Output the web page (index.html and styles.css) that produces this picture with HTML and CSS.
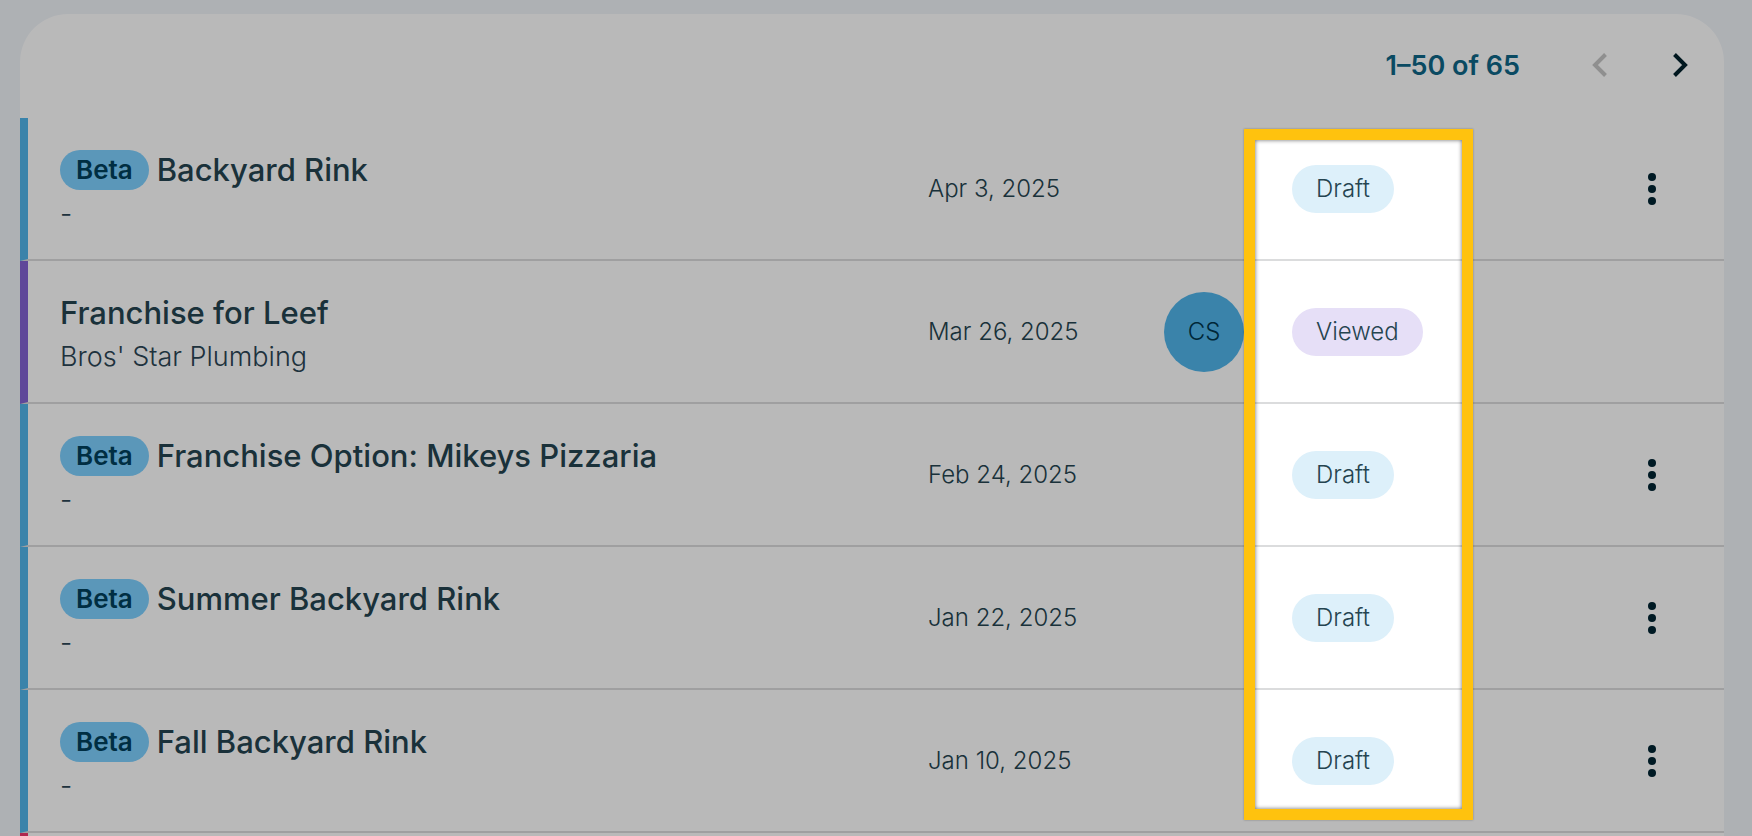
FILE: index.html
```html
<!DOCTYPE html>
<html lang="en">
  <head>
    <meta charset="UTF-8" />
    <meta name="viewport" content="width=device-width, initial-scale=1.0" />
    <title>Quotes</title>
    <link rel="stylesheet" href="styles.css">
  </head>
  <body>
    <main class="page">
      <section class="card">
        <div class="pager">
          <span class="pager-count">1–50 of 65</span>
          <button class="pager-btn" aria-label="Previous page" disabled>
            <svg width="16" height="26" viewBox="0 0 16 26"><path d="M13.500 2.500 3 13l10.500 10.500" /></svg>
          </button>
          <button class="pager-btn" aria-label="Next page">
            <svg width="16" height="26" viewBox="0 0 16 26"><path d="M2.500 2.500 13 13 2.500 23.500" /></svg>
          </button>
        </div>

        <table class="quotes">
          <colgroup>
            <col>
            <col class="col-date">
            <col class="col-owner">
            <col class="col-status">
            <col class="col-menu">
          </colgroup>
          <tbody>
            <tr>
              <td class="name blue">
                <div class="title"><span class="beta">Beta</span>Backyard Rink</div>
                <div class="client">-</div>
              </td>
              <td class="date">Apr 3, 2025</td>
              <td></td>
              <td><span class="status draft">Draft</span></td>
              <td class="menu">
                <button class="menu-btn" aria-label="More options">
                  <svg width="8" height="32" viewBox="0 0 8 32"><circle cx="4" cy="4" r="4" /><circle cx="4" cy="16" r="4" /><circle cx="4" cy="28" r="4" /></svg>
                </button>
              </td>
            </tr>
            <tr>
              <td class="name purple">
                <div class="title">Franchise for Leef</div>
                <div class="client">Bros' Star Plumbing</div>
              </td>
              <td class="date">Mar 26, 2025</td>
              <td><span class="avatar">CS</span></td>
              <td><span class="status viewed">Viewed</span></td>
              <td class="menu"></td>
            </tr>
            <tr>
              <td class="name blue">
                <div class="title"><span class="beta">Beta</span>Franchise Option: Mikeys Pizzaria</div>
                <div class="client">-</div>
              </td>
              <td class="date">Feb 24, 2025</td>
              <td></td>
              <td><span class="status draft">Draft</span></td>
              <td class="menu">
                <button class="menu-btn" aria-label="More options">
                  <svg width="8" height="32" viewBox="0 0 8 32"><circle cx="4" cy="4" r="4" /><circle cx="4" cy="16" r="4" /><circle cx="4" cy="28" r="4" /></svg>
                </button>
              </td>
            </tr>
            <tr>
              <td class="name blue">
                <div class="title"><span class="beta">Beta</span>Summer Backyard Rink</div>
                <div class="client">-</div>
              </td>
              <td class="date">Jan 22, 2025</td>
              <td></td>
              <td><span class="status draft">Draft</span></td>
              <td class="menu">
                <button class="menu-btn" aria-label="More options">
                  <svg width="8" height="32" viewBox="0 0 8 32"><circle cx="4" cy="4" r="4" /><circle cx="4" cy="16" r="4" /><circle cx="4" cy="28" r="4" /></svg>
                </button>
              </td>
            </tr>
            <tr>
              <td class="name blue">
                <div class="title"><span class="beta">Beta</span>Fall Backyard Rink</div>
                <div class="client">-</div>
              </td>
              <td class="date">Jan 10, 2025</td>
              <td></td>
              <td><span class="status draft">Draft</span></td>
              <td class="menu">
                <button class="menu-btn" aria-label="More options">
                  <svg width="8" height="32" viewBox="0 0 8 32"><circle cx="4" cy="4" r="4" /><circle cx="4" cy="16" r="4" /><circle cx="4" cy="28" r="4" /></svg>
                </button>
              </td>
            </tr>
            <tr>
              <td class="name pink"></td>
              <td></td>
              <td></td>
              <td></td>
              <td></td>
            </tr>
          </tbody>
        </table>
      </section>
      <div class="spotlight"><div class="spotlight-frame"></div></div>
    </main>
  </body>
</html>
```

FILE: styles.css
```css
* {
  box-sizing: border-box;
}
body {
  margin: 0;
  font-family: Inter, "Liberation Sans", sans-serif;
  color: #254450;
}
.page {
  position: relative;
  height: 100vh;
  overflow: hidden;
  padding: 14px 28px 0 20px;
  background: #f0f4f9;
}
.card {
  background: #fff;
  border-radius: 48px 48px 0 0;
}
button {
  display: inline-flex;
  align-items: center;
  justify-content: center;
  padding: 0;
  border: 0;
  background: none;
  cursor: pointer;
}

/* pager */
.pager {
  display: flex;
  align-items: center;
  justify-content: flex-end;
  height: 104px;
  padding: 0 4px 2px 0;
}
.pager-count {
  margin-right: 40px;
  font-size: 27px;
  font-weight: 600;
  color: #0e6687;
}
.pager-btn {
  width: 80px;
  height: 80px;
}
.pager-btn path {
  fill: none;
  stroke: #00202c;
  stroke-width: 4;
}
.pager-btn:disabled path {
  stroke: #c5c5c5;
}

/* table */
.quotes {
  width: 100%;
  table-layout: fixed;
  border-collapse: separate;
  border-spacing: 0;
}
.col-date {
  width: 236px;
}
.col-owner {
  width: 128px;
}
.col-status {
  width: 288px;
}
.col-menu {
  width: 144px;
}
td {
  height: 143px;
  padding: 0;
  border-bottom: 2px solid #dbdcdd;
  vertical-align: middle;
}
.name {
  padding-top: 2px;
  padding-left: 32px;
  border-left: 8px solid;
}
.blue {
  border-left-color: #50b5eb;
}
.purple {
  border-left-color: #8363d3;
}
.pink {
  border-left-color: #f3376e;
}
.title {
  display: flex;
  align-items: center;
  gap: 8px;
  height: 40px;
  font-size: 31px;
  font-weight: 500;
  white-space: nowrap;
}
.beta {
  padding: 0 16px;
  border-radius: 20px;
  background: #7ed0ff;
  color: #00405c;
  font-size: 26px;
  font-weight: 600;
  line-height: 40px;
}
.client {
  margin-top: 8px;
  color: #2b4555;
  font-size: 27px;
  font-weight: 300;
  line-height: 32px;
}
.date {
  font-size: 24px;
  font-weight: 300;
}
.avatar {
  display: flex;
  align-items: center;
  justify-content: center;
  width: 80px;
  height: 80px;
  border-radius: 50%;
  background: #50b5eb;
  color: #00354d;
  font-size: 24px;
  font-weight: 300;
}
.status {
  display: inline-block;
  padding: 0 24px;
  border-radius: 24px;
  font-size: 24px;
  font-weight: 300;
  line-height: 48px;
  vertical-align: middle;
}
.draft {
  background: #ddf0fa;
}
.viewed {
  background: #e6dff7;
}
.menu {
  text-align: center;
}
.menu-btn {
  width: 80px;
  height: 80px;
  vertical-align: middle;
}
.menu-btn svg {
  fill: #002432;
}

/* dims everything except the status column */
.spotlight {
  position: absolute;
  top: 129px;
  right: 279px;
  width: 229px;
  height: 691px;
  box-shadow: 0 0 0 4000px rgba(0, 0, 0, 0.275);
  pointer-events: none;
}
.spotlight-frame {
  height: 100%;
  border: 11px solid #ffc20e;
  box-shadow: 0 0 2px rgba(0, 0, 0, 0.3), inset 0 0 4px rgba(0, 0, 0, 0.6);
}
```
